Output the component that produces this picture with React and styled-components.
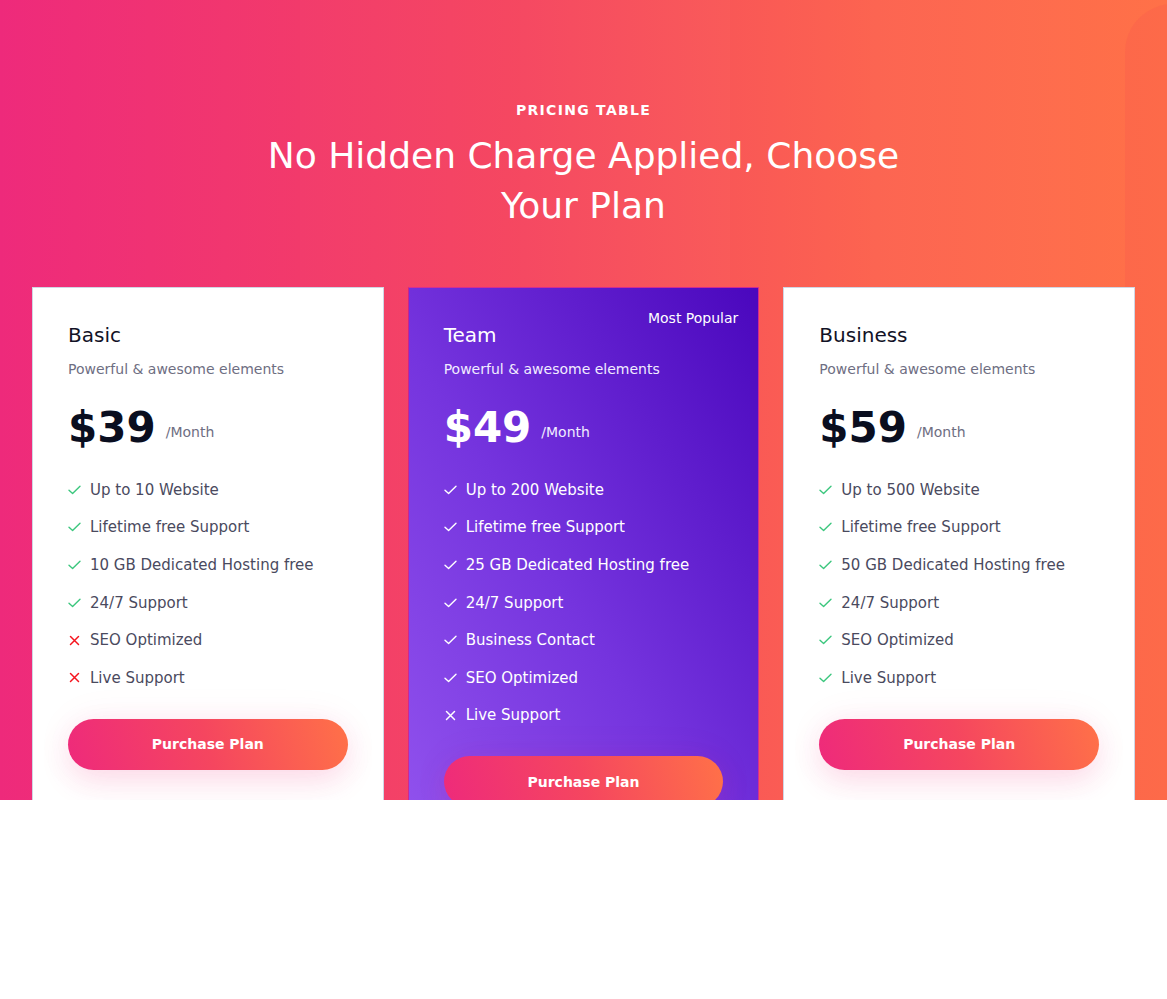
import React from "react";
import styled, { createGlobalStyle } from "styled-components";

const Global = createGlobalStyle`
  html, body { margin: 0; padding: 0; background: #ffffff; }
  body { font-family: "DejaVu Sans", "Liberation Sans", sans-serif; }
  * { box-sizing: border-box; }
`;

const Section = styled.section`
  position: relative;
  height: 800px;
  overflow: hidden;
  padding: 100px 32px 0;
  background: linear-gradient(90deg, #ee2a7b 0%, #f5465f 45%, #fc6450 75%, #ff7148 100%);
`;

const Stripe = styled.div`
  position: absolute;
  top: 0;
  bottom: 0;
  left: ${(p) => p.$left}px;
  width: ${(p) => p.$width}px;
  background: rgba(255, 255, 255, ${(p) => p.$alpha});
  pointer-events: none;
`;

const Blob = styled.div`
  position: absolute;
  top: 4px;
  left: 1125px;
  width: 120px;
  height: 1000px;
  border-top-left-radius: 48px;
  background: rgba(248, 80, 78, 0.22);
  pointer-events: none;
`;

const Header = styled.header`
  position: relative;
  display: flex;
  flex-direction: column;
  align-items: center;
  text-align: center;
`;

const Eyebrow = styled.div`
  color: #ffffff;
  font-size: 14px;
  line-height: 20px;
  font-weight: 700;
  letter-spacing: 1.3px;
`;

const Title = styled.h2`
  margin: 11px 0 0;
  max-width: 660px;
  color: #ffffff;
  font-size: 36px;
  line-height: 50px;
  font-weight: 400;
`;

const Grid = styled.div`
  position: relative;
  margin-top: 56px;
  display: grid;
  grid-template-columns: repeat(3, 1fr);
  gap: 24px;
`;

const Card = styled.div`
  position: relative;
  padding: 35px 35px 40px;
  border: 1px solid ${(p) => (p.$featured ? "rgba(226, 40, 130, 0.85)" : "#cfd6e4")};
  background: ${(p) =>
    p.$featured
      ? "linear-gradient(to top right, #9253ee 0%, #7534de 45%, #4a07bd 100%)"
      : "#ffffff"};
`;

const Badge = styled.div`
  position: absolute;
  top: 20px;
  right: 20px;
  color: #ffffff;
  font-size: 14px;
  line-height: 20px;
`;

const PlanName = styled.h3`
  margin: 0;
  font-size: 20px;
  line-height: 24px;
  font-weight: 400;
  color: ${(p) => (p.$featured ? "#ffffff" : "#121226")};
`;

const PlanSub = styled.p`
  margin: 12px 0 0;
  font-size: 14px;
  line-height: 20px;
  color: ${(p) => (p.$featured ? "#f1ecff" : "#6e6e82")};
`;

const PriceRow = styled.div`
  margin-top: 23px;
  display: flex;
  align-items: center;
  height: 52px;
`;

const Price = styled.span`
  font-size: 42px;
  line-height: 52px;
  font-weight: 700;
  color: ${(p) => (p.$featured ? "#ffffff" : "#0a0e1f")};
`;

const Per = styled.span`
  margin-left: 10px;
  margin-top: 8px;
  font-size: 14px;
  color: ${(p) => (p.$featured ? "#f1ecff" : "#6e6e82")};
`;

const List = styled.ul`
  list-style: none;
  margin: 17px 0 0;
  padding: 0;
`;

const Item = styled.li`
  display: flex;
  align-items: center;
  gap: 9px;
  height: 37.6px;
  font-size: 15px;
  color: ${(p) => (p.$featured ? "#ffffff" : "#4a4a5e")};
`;

const IconBox = styled.span`
  display: inline-flex;
  width: 13px;
  justify-content: center;
  color: ${(p) => p.$color};
`;

const Button = styled.button`
  margin-top: 22px;
  width: 100%;
  height: 51px;
  border: 0;
  border-radius: 26px;
  font-family: inherit;
  font-size: 14px;
  font-weight: 700;
  color: #ffffff;
  cursor: pointer;
  background: linear-gradient(75deg, #ee2a7b 0%, #f5465f 50%, #ff7148 100%);
  box-shadow: 0 12px 30px rgba(238, 42, 123, 0.14), 0 0 40px rgba(238, 42, 123, 0.06);
`;

const Check = () => (
  <svg width="13" height="10" viewBox="0 0 13 10" fill="none">
    <path d="M1 5.2 L4.6 8.6 L12 1.2" stroke="currentColor" strokeWidth="1.4" strokeLinecap="round" strokeLinejoin="round" />
  </svg>
);

const Cross = () => (
  <svg width="11" height="11" viewBox="0 0 11 11" fill="none">
    <path d="M1.5 1.5 L9.5 9.5 M9.5 1.5 L1.5 9.5" stroke="currentColor" strokeWidth="1.5" strokeLinecap="round" />
  </svg>
);

const plans = [
  {
    name: "Basic",
    price: "$39",
    features: [
      ["Up to 10 Website", true],
      ["Lifetime free Support", true],
      ["10 GB Dedicated Hosting free", true],
      ["24/7 Support", true],
      ["SEO Optimized", false],
      ["Live Support", false],
    ],
  },
  {
    name: "Team",
    price: "$49",
    featured: true,
    features: [
      ["Up to 200 Website", true],
      ["Lifetime free Support", true],
      ["25 GB Dedicated Hosting free", true],
      ["24/7 Support", true],
      ["Business Contact", true],
      ["SEO Optimized", true],
      ["Live Support", false],
    ],
  },
  {
    name: "Business",
    price: "$59",
    features: [
      ["Up to 500 Website", true],
      ["Lifetime free Support", true],
      ["50 GB Dedicated Hosting free", true],
      ["24/7 Support", true],
      ["SEO Optimized", true],
      ["Live Support", true],
    ],
  },
];

export default function App() {
  return (
    <>
      <Global />
      <Section>
        <Stripe $left={300} $width={220} $alpha={0.012} />
        <Stripe $left={520} $width={210} $alpha={0.018} />
        <Stripe $left={870} $width={150} $alpha={0.012} />
        <Stripe $left={1020} $width={50} $alpha={0.01} />
        <Blob />
        <Header>
          <Eyebrow>PRICING TABLE</Eyebrow>
          <Title>No Hidden Charge Applied, Choose Your Plan</Title>
        </Header>
        <Grid>
          {plans.map((plan) => {
            const f = !!plan.featured;
            return (
              <Card key={plan.name} $featured={f}>
                {f && <Badge>Most Popular</Badge>}
                <PlanName $featured={f}>{plan.name}</PlanName>
                <PlanSub $featured={f}>Powerful &amp; awesome elements</PlanSub>
                <PriceRow>
                  <Price $featured={f}>{plan.price}</Price>
                  <Per $featured={f}>/Month</Per>
                </PriceRow>
                <List>
                  {plan.features.map(([text, ok]) => (
                    <Item key={text} $featured={f}>
                      <IconBox $color={f ? "#ffffff" : ok ? "#3cc77e" : "#f5141e"}>
                        {ok ? <Check /> : <Cross />}
                      </IconBox>
                      {text}
                    </Item>
                  ))}
                </List>
                <Button>Purchase Plan</Button>
              </Card>
            );
          })}
        </Grid>
      </Section>
    </>
  );
}
